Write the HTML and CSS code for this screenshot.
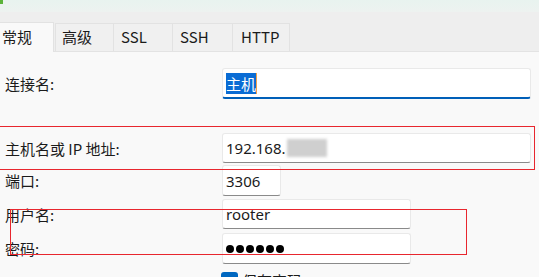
FILE: index.html
```html
<!DOCTYPE html>
<html lang="zh-CN">
<head>
    <meta charset="UTF-8">
    <title>连接属性</title>
    <link rel="stylesheet" href="styles.css">
</head>
<body>
    <div class="titlebar">
        <span class="app-mark"></span>
        <span class="title-text">新建连接 - 连接属性</span>
    </div>

    <div class="tabs">
        <div class="tab active">常规</div>
        <div class="tab t2">高级</div>
        <div class="tab t3">SSL</div>
        <div class="tab t4">SSH</div>
        <div class="tab t5">HTTP</div>
    </div>

    <div class="panel">
        <div class="row r1">
            <label class="lbl">连接名:</label>
            <div class="field wide focused"><span class="sel">主机</span><span class="caret"></span></div>
        </div>
        <div class="row r2">
            <label class="lbl">主机名或 IP 地址:</label>
            <div class="field wide">192.168.<span class="blur"></span></div>
        </div>
        <div class="row r3">
            <label class="lbl">端口:</label>
            <div class="field port">3306</div>
        </div>
        <div class="row r4">
            <label class="lbl">用户名:</label>
            <div class="field mid">rooter</div>
        </div>
        <div class="row r5">
            <label class="lbl">密码:</label>
            <div class="field mid dots"><i></i><i></i><i></i><i></i><i></i><i></i></div>
        </div>
        <div class="row r6">
            <span class="check"><svg width="12" height="12" viewBox="0 0 12 12"><path d="M2 6.3l2.6 2.6L10 3.4" fill="none" stroke="#fff" stroke-width="1.6"/></svg></span>
            <span class="check-text">保存密码</span>
        </div>

        <!-- annotation boxes drawn over the form -->
        <div class="mark mark-host"></div>
        <div class="mark mark-login"></div>
    </div>
</body>
</html>
```
FILE: styles.css
```css
body {
    margin: 0;
    width: 539px;
    height: 277px;
    overflow: hidden;
    font-family: "Noto Sans CJK SC", "Noto Sans", sans-serif;
    font-size: 15px;
    color: #1b1b1b;
    background-color: #efefef;
}

.titlebar {
    height: 12px;
    overflow: hidden;
    display: flex;
    background: linear-gradient(180deg, #e8f3ef, #edf2f0);
}

.app-mark {
    width: 3px;
    height: 4px;
    background-color: #5bb33a;
}

.title-text {
    margin: -21px 0 0 10px;
    font-size: 15px;
    line-height: 18px;
    height: 23px;
    color: #222;
}

.tabs {
    display: flex;
    align-items: flex-end;
    height: 39px;
    background-color: #eeeeee;
    border-bottom: 1px solid #e3e3e3;
}

.tab {
    box-sizing: border-box;
    height: 28px;
    padding-left: 6px;
    line-height: 26px;
    background-color: #f0f0f0;
    border: 1px solid #e2e2e2;
    border-left: none;
    border-bottom: none;
}

.tab.active {
    width: 54px;
    height: 30px;
    padding-left: 2px;
    background-color: #f9f9f9;
    margin-bottom: -1px;
    line-height: 28px;
}

.t2 { width: 59px; padding-left: 6px; margin-left: 1px; border-left: 1px solid #e2e2e2; }
.t3 { width: 59px; padding-left: 7px; }
.t4 { width: 60px; padding-left: 7px; }
.t5 { width: 57px; padding-left: 8px; }

.panel {
    position: relative;
    height: 225px;
    padding-top: 16px;
    box-sizing: border-box;
    background-color: #f9f9f9;
}

.row {
    display: flex;
    align-items: center;
    height: 31px;
}

.r2 { margin-top: 34px; height: 30px; }
.r3 { margin-top: 2px; }
.r4 { margin-top: 3px; height: 30px; }
.r5 { margin-top: 4px; }
.r6 { margin-top: 8px; padding-left: 221px; height: 17px; align-items: flex-start; }

.lbl {
    width: 217px;
    padding-left: 5px;
    flex-shrink: 0;
}

.field {
    box-sizing: border-box;
    height: 100%;
    padding-left: 3px;
    display: flex;
    align-items: center;
    background-color: #ffffff;
    border: 1px solid #e9e9e9;
    border-bottom: 1px solid #8a8a8a;
    border-radius: 3px;
    font-family: "Noto Sans", sans-serif;
    font-size: 15px;
    color: #1b1b1b;
}

.wide { width: 309px; }
.port { width: 59px; }
.mid { width: 189px; }

.focused {
    border-bottom: 2px solid #005fb8;
}

.sel {
    background-color: #0a6cd4;
    color: #fff;
    font-family: "Noto Sans CJK SC", sans-serif;
    line-height: 21px;
    height: 21px;
}

.caret {
    width: 1px;
    height: 21px;
    background-color: #f0a04a;
}

.blur {
    display: inline-block;
    width: 40px;
    height: 18px;
    margin-left: 1px;
    background-color: #cfcfcf;
    filter: blur(1.5px);
}

.dots i {
    width: 8px;
    height: 8px;
    margin-right: 2px;
    border-radius: 50%;
    background-color: #000;
}

.check {
    width: 17px;
    height: 17px;
    border-radius: 3px;
    background-color: #0067c0;
    display: flex;
    align-items: center;
    justify-content: center;
}

.check-text {
    margin-left: 4px;
    line-height: 17px;
}

.mark {
    position: absolute;
    border: 1px solid #e8262e;
}

.mark-host {
    left: -2px;
    top: 74px;
    width: 535px;
    height: 42px;
}

.mark-login {
    left: 10px;
    top: 157px;
    width: 455px;
    height: 44px;
}
```
